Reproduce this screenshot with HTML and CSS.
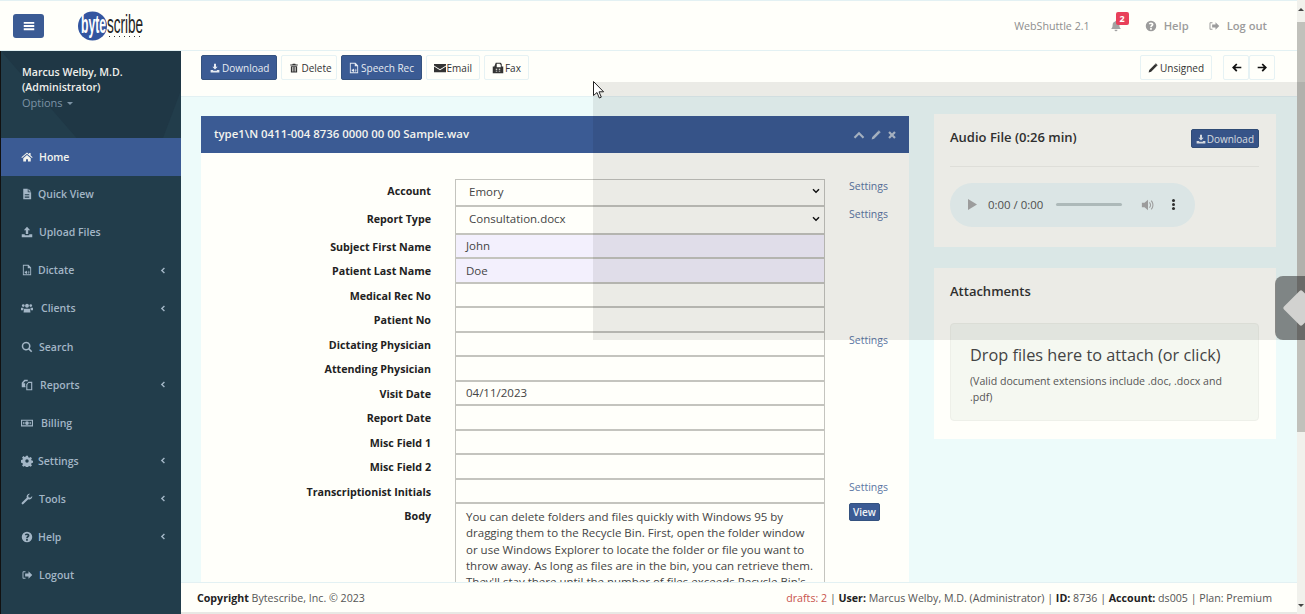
FILE: index.html
```html
<!DOCTYPE html>
<html lang="en">
<head>
    <meta charset="UTF-8">
    <title>WebShuttle</title>
    <link rel="stylesheet" href="styles.css">
</head>
<body>
    <svg class="icon-defs" aria-hidden="true">
        <symbol id="i-bars" viewBox="0 0 16 16"><path d="M1 2.5h14v2.4H1zM1 6.8h14v2.4H1zM1 11.1h14v2.4H1z"/></symbol>
        <symbol id="i-home" viewBox="0 0 16 16"><path d="M8 2 .5 8.3l.9 1L8 3.8l6.6 5.5.9-1L12.8 6V2.6h-2v1.7zM3 9.6V14h3.7v-3h2.6v3H13V9.6L8 5.4z"/></symbol>
        <symbol id="i-file" viewBox="0 0 16 16"><path d="M3 1h6v4.5h4.5V15H3zM10 1l3.5 3.5H10zM5 8v1h6V8zm0 2.2v1h6v-1zm0 2.2v1h6v-1z" fill-rule="evenodd"/></symbol>
        <symbol id="i-upload" viewBox="0 0 16 16"><path d="M8 1 3.8 5.5h2.6v5h3.2v-5h2.6zM1 11h4v1.2h6V11h4v4H1z"/></symbol>
        <symbol id="i-download" viewBox="0 0 16 16"><path d="M6.4 1h3.2v5h2.6L8 10.5 3.8 6h2.6zM1 11h4v1.2h6V11h4v4H1z"/></symbol>
        <symbol id="i-audio" viewBox="0 0 16 16"><path d="M2.5 1H10l3.5 3.500V15h-11zM3.700 2.200v11.600h8.600V5.600H9V2.200zM5 10h1.500L8 8.600v5L6.500 12.200H5zm4 0c.9.700.9 1.800 0 2.500zm1-1.200c1.600 1.200 1.600 3.600 0 4.800z" fill-rule="evenodd"/></symbol>
        <symbol id="i-users" viewBox="0 0 16 16"><circle cx="8" cy="5" r="2.600"/><circle cx="3" cy="4.800" r="1.800"/><circle cx="13" cy="4.800" r="1.800"/><path d="M4 9h8l.6 5H3.400zM0 7.500h3.400L3 11H0zM12.600 7.500H16V11h-3z"/></symbol>
        <symbol id="i-search" viewBox="0 0 16 16"><path d="M6.800 1a5.800 5.800 0 1 0 3.300 10.600l3.400 3.400 1.500-1.500-3.400-3.400A5.800 5.800 0 0 0 6.800 1m0 2a3.800 3.800 0 1 1 0 7.600 3.800 3.800 0 0 1 0-7.600" fill-rule="evenodd"/></symbol>
        <symbol id="i-copy" viewBox="0 0 16 16"><path d="M4.500 1H9v2H5.500L3 5.500h2.500v4H6v1.500H1V5zM10 3.500h5V15H7V7zM10 5.300 8.500 7.600v6h5V5.300z" fill-rule="evenodd"/></symbol>
        <symbol id="i-money" viewBox="0 0 16 16"><path d="M0 3.500h16v9H0zm1.500 1.500v6h13V5zM8 5.500a2.500 2.500 0 1 1 0 5 2.500 2.500 0 0 1 0-5M3 6.500h1.500v3H3zM11.500 6.500H13v3h-1.500z" fill-rule="evenodd"/></symbol>
        <symbol id="i-cog" viewBox="0 0 16 16"><path d="M6.700 1h2.600l.4 2 1.400.6 1.700-1.100 1.800 1.800-1.100 1.700.6 1.400 2 .4v2.600l-2 .4-.6 1.400 1.100 1.700-1.800 1.800-1.700-1.100-1.400.6-.4 2H6.700l-.4-2-1.400-.6-1.700 1.100-1.800-1.800 1.100-1.700-.6-1.400-2-.4V6.700l2-.4.6-1.400-1.100-1.700 1.800-1.800 1.700 1.100 1.400-.6zM8 5.700a2.300 2.300 0 1 0 0 4.600 2.300 2.300 0 0 0 0-4.600" fill-rule="evenodd"/></symbol>
        <symbol id="i-wrench" viewBox="0 0 16 16"><path d="M11.500 1a4 4 0 0 0-3.800 5.300L1.200 12.800a1.400 1.400 0 0 0 2 2l6.500-6.500A4 4 0 0 0 15 4l-2.600 2.400L10 5.500 9.600 3.300 12.200 1z"/></symbol>
        <symbol id="i-help" viewBox="0 0 16 16"><path d="M8 1a7 7 0 1 0 0 14A7 7 0 0 0 8 1m-1.200 9.800h2.300V13H6.800zM8 3.200c2 0 3.300 1.100 3.300 2.700 0 2.200-2.300 2.200-2.200 3.900H6.900c-.2-2.500 2-2.800 2-3.800 0-.5-.4-.8-1-.8-.6 0-1.100.3-1.600.8L5 4.700c.8-1 1.800-1.500 3-1.500" fill-rule="evenodd"/></symbol>
        <symbol id="i-logout" viewBox="0 0 16 16"><path d="M6 3H3.500C2.700 3 2 3.700 2 4.500v7c0 .8.700 1.500 1.500 1.500H6v-1.300H3.800c-.3 0-.5-.2-.5-.5V4.800c0-.3.200-.5.500-.5H6zM10 3l5 5-5 5v-3H5.500V6H10z"/></symbol>
        <symbol id="i-trash" viewBox="0 0 16 16"><path d="M6 1h4l.7 1.500H14V4H2V2.500h3.300zM3 5h10v10H3zm2 1.500v7h1v-7zm2.500 0v7h1v-7zm2.500 0v7h1v-7z" fill-rule="evenodd"/></symbol>
        <symbol id="i-mail" viewBox="0 0 16 16"><path d="M0 2.500h16v2L8 9.500l-8-5zM0 6l8 5 8-5v7.500H0z"/></symbol>
        <symbol id="i-fax" viewBox="0 0 16 16"><path d="M5 1h6.500L13 2.500V6h2v9H1V6h2zm1.300 1.200V7h5.400V3.200H10.500v-1zM5 9v1.300h2V9zm4 0v1.300h2V9zm-4 2.500v1.300h2v-1.300zm4 0v1.300h2v-1.300z" fill-rule="evenodd"/></symbol>
        <symbol id="i-pencil" viewBox="0 0 16 16"><path d="M11.500 1.500 14.500 4.500 5 14l-4 1 1-4zM12.500 .5l3 3-.8.8-3-3z"/></symbol>
        <symbol id="i-bell" viewBox="0 0 16 16"><path d="M8 1a1 1 0 0 1 1 1c2.500.5 3.500 2.300 3.500 4.500 0 3 1 4 2 5.500h-13c1-1.500 2-2.500 2-5.500C3.500 4.300 4.500 2.500 7 2a1 1 0 0 1 1-1M6 13h4a2 2 0 0 1-4 0"/></symbol>
        <symbol id="i-close" viewBox="0 0 16 16"><path d="M4.500 2 8 5.500 11.500 2 14 4.500 10.500 8l3.500 3.500-2.500 2.500L8 10.500 4.500 14 2 11.500 5.500 8 2 4.500z"/></symbol>
        <symbol id="i-up" viewBox="0 0 16 16"><path d="M8 3.500 15 10.500l-2 2-5-5-5 5-2-2z"/></symbol>
        <symbol id="i-left" viewBox="0 0 16 16"><path d="M7.500 2 9.300 3.800 6.300 6.800H15v2.400H6.300l3 3L7.500 14 1.500 8z"/></symbol>
        <symbol id="i-right" viewBox="0 0 16 16"><path d="M8.500 2 6.700 3.800l3 3H1v2.400h8.700l-3 3L8.500 14l6-6z"/></symbol>
        <symbol id="i-angle" viewBox="0 0 16 16"><path d="M10.500 2.500 12.300 4.300 8.500 8l3.800 3.700-1.800 1.800L5 8z"/></symbol>
        <symbol id="i-drop" viewBox="0 0 16 16"><path d="M1 5.500 3 3.500 8 8.500 13 3.500 15 5.500 8 12.500z"/></symbol>
    </svg>

    <div class="page">
        <div class="page-main">
            <header class="topbar">
                <button class="menu-btn"><svg class="ico"><use href="#i-bars"/></svg></button>
                <svg class="logo" viewBox="0 -4 66 38" width="66" height="38">
                    <circle cx="14.500" cy="15" r="14.500" fill="#3355a0"/>
                    <text transform="translate(3 22) scale(.467 1)" class="logo-byte">byte</text>
                    <text transform="translate(29 22) scale(.52 1)" class="logo-scribe">scribe</text>
                    <path d="M31 25.500h1M36 25.500h1M41 25.500h1M46 25.500h1M51 25.500h1M56 25.500h1M61 25.500h1" stroke="#333" stroke-width="1.200"/>
                </svg>
                <div class="topbar-right">
                    <span class="version">WebShuttle 2.1</span>
                    <span class="bell"><svg class="ico"><use href="#i-bell"/></svg><span class="badge">2</span></span>
                    <a class="top-link top-help"><svg class="ico"><use href="#i-help"/></svg>Help</a>
                    <a class="top-link"><svg class="ico"><use href="#i-logout"/></svg>Log out</a>
                </div>
            </header>

            <div class="layout">
                <aside class="sidebar">
                    <div class="user-panel">
                        <div class="user-name">Marcus Welby, M.D.<br>(Administrator)</div>
                        <div class="user-options">Options <span class="caret"></span></div>
                    </div>
                    <nav class="nav">
                        <a class="nav-item active"><svg class="ico"><use href="#i-home"/></svg><span>Home</span></a>
                        <a class="nav-item"><svg class="ico"><use href="#i-file"/></svg><span class="slim">Quick View</span></a>
                        <a class="nav-item"><svg class="ico"><use href="#i-upload"/></svg><span>Upload Files</span></a>
                        <a class="nav-item"><svg class="ico"><use href="#i-audio"/></svg><span class="slim">Dictate</span><svg class="ico angle"><use href="#i-angle"/></svg></a>
                        <a class="nav-item"><svg class="ico"><use href="#i-users"/></svg><span class="wide">Clients</span><svg class="ico angle"><use href="#i-angle"/></svg></a>
                        <a class="nav-item"><svg class="ico"><use href="#i-search"/></svg><span>Search</span></a>
                        <a class="nav-item"><svg class="ico"><use href="#i-copy"/></svg><span class="mid">Reports</span><svg class="ico angle"><use href="#i-angle"/></svg></a>
                        <a class="nav-item"><svg class="ico"><use href="#i-money"/></svg><span class="wide">Billing</span></a>
                        <a class="nav-item"><svg class="ico"><use href="#i-cog"/></svg><span class="slim">Settings</span><svg class="ico angle"><use href="#i-angle"/></svg></a>
                        <a class="nav-item"><svg class="ico"><use href="#i-wrench"/></svg><span>Tools</span><svg class="ico angle"><use href="#i-angle"/></svg></a>
                        <a class="nav-item"><svg class="ico"><use href="#i-help"/></svg><span class="slim">Help</span><svg class="ico angle"><use href="#i-angle"/></svg></a>
                        <a class="nav-item"><svg class="ico"><use href="#i-logout"/></svg><span>Logout</span></a>
                    </nav>
                </aside>

                <div class="content">
                    <div class="toolbar">
                        <button class="btn btn-blue btn-download"><svg class="ico"><use href="#i-download"/></svg>Download</button>
                        <button class="btn btn-delete"><svg class="ico"><use href="#i-trash"/></svg>Delete</button>
                        <button class="btn btn-blue btn-lg btn-speech"><svg class="ico"><use href="#i-audio"/></svg>Speech Rec</button>
                        <button class="btn btn-lg"><svg class="ico"><use href="#i-mail"/></svg>Email</button>
                        <button class="btn btn-lg"><svg class="ico"><use href="#i-fax"/></svg>Fax</button>
                        <div class="toolbar-right">
                            <button class="btn"><svg class="ico"><use href="#i-pencil"/></svg>Unsigned</button>
                            <div class="btn-group">
                                <button class="btn btn-arrow"><svg class="ico"><use href="#i-left"/></svg></button>
                                <button class="btn btn-arrow"><svg class="ico"><use href="#i-right"/></svg></button>
                            </div>
                        </div>
                    </div>

                    <main class="workspace">
                        <section class="panel">
                            <div class="panel-head">
                                <h2>type1\N 0411-004 8736 0000 00 00 Sample.wav</h2>
                                <div class="panel-tools">
                                    <svg class="ico tool-up"><use href="#i-up"/></svg>
                                    <svg class="ico"><use href="#i-pencil"/></svg>
                                    <svg class="ico"><use href="#i-close"/></svg>
                                </div>
                            </div>
                            <form class="form">
                                <label>Account</label>
                                <div class="field field-select">Emory<svg class="ico"><use href="#i-drop"/></svg></div>
                                <a class="settings">Settings</a>

                                <label>Report Type</label>
                                <div class="field field-select">Consultation.docx<svg class="ico"><use href="#i-drop"/></svg></div>
                                <a class="settings">Settings</a>

                                <label>Subject First Name</label>
                                <div class="field field-req">John</div>
                                <span></span>

                                <label>Patient Last Name</label>
                                <div class="field field-req">Doe</div>
                                <span></span>

                                <label>Medical Rec No</label>
                                <div class="field"></div>
                                <span></span>

                                <label>Patient No</label>
                                <div class="field"></div>
                                <span></span>

                                <label>Dictating Physician</label>
                                <div class="field"></div>
                                <a class="settings">Settings</a>

                                <label>Attending Physician</label>
                                <div class="field"></div>
                                <span></span>

                                <label>Visit Date</label>
                                <div class="field">04/11/2023</div>
                                <span></span>

                                <label>Report Date</label>
                                <div class="field"></div>
                                <span></span>

                                <label>Misc Field 1</label>
                                <div class="field"></div>
                                <span></span>

                                <label>Misc Field 2</label>
                                <div class="field"></div>
                                <span></span>

                                <label>Transcriptionist Initials</label>
                                <div class="field"></div>
                                <a class="settings">Settings</a>

                                <label>Body</label>
                                <div class="field field-body">You can delete folders and files quickly with Windows 95 by dragging them to the Recycle Bin. First, open the folder window or use Windows Explorer to locate the folder or file you want to throw away. As long as files are in the bin, you can retrieve them. They'll stay there until the number of files exceeds Recycle Bin's</div>
                                <div><button type="button" class="btn-view">View</button></div>
                            </form>
                        </section>

                        <div class="side-col">
                            <section class="card card-audio">
                                <div class="card-head">
                                    <h3>Audio File (0:26 min)</h3>
                                    <button class="btn btn-blue btn-sm"><svg class="ico"><use href="#i-download"/></svg>Download</button>
                                </div>
                                <div class="player">
                                    <svg class="player-play" viewBox="0 0 10 12" width="9" height="11"><path d="M0 0l10 6-10 6z"/></svg>
                                    <span class="player-time">0:00 / 0:00</span>
                                    <span class="player-bar"></span>
                                    <svg class="player-vol" viewBox="0 0 16 16" width="14" height="14"><path d="M1 5.500h3L8 2v12L4 10.500H1zM10 4.500c2 2 2 5 0 7l-.8-.8c1.500-1.600 1.500-3.800 0-5.400zM12 2.500c3 3 3 8 0 11l-.8-.8c2.500-2.600 2.500-6.800 0-9.400z"/></svg>
                                    <span class="player-more"></span>
                                </div>
                            </section>
                            <section class="card card-attach">
                                <h3>Attachments</h3>
                                <div class="dropzone">
                                    <h4>Drop files here to attach (or click)</h4>
                                    <p>(Valid document extensions include .doc, .docx and .pdf)</p>
                                </div>
                            </section>
                        </div>
                    </main>

                    <footer class="footer">
                        <div><b>Copyright</b> Bytescribe, Inc. © 2023</div>
                        <div><span class="drafts">drafts: 2</span> | <b>User:</b> Marcus Welby, M.D. (Administrator) | <b>ID:</b> 8736 | <b>Account:</b> ds005 | Plan: Premium</div>
                    </footer>
                </div>
            </div>
        </div>
        <div class="scrollbar">
            <span class="scroll-up"></span>
            <span class="scroll-thumb"></span>
            <span class="scroll-down"></span>
        </div>
    </div>

    <div class="handle"><span class="handle-diamond"></span></div>
    <div class="shade"></div>
    <svg class="cursor" viewBox="0 0 12 18" width="12" height="18"><path d="M.5.500v14l3.500-3 2.300 5.500 2-.9-2.300-5.300h4.600z" fill="#fff" stroke="#222" stroke-width="1"/></svg>
</body>
</html>
```
FILE: styles.css
```css
* { box-sizing: border-box; }

html, body {
    height: 100%;
    margin: 0;
    overflow: hidden;
}
body {
    font-family: "Open Sans", sans-serif;
    font-size: 11px;
    color: #333;
    background: #fffffa;
}
a { text-decoration: none; }
h2, h3, h4, p { margin: 0; }
button { font-family: inherit; cursor: pointer; }

.icon-defs { display: none; }
.ico {
    width: 12px;
    height: 12px;
    fill: currentColor;
    flex: none;
}

.page {
    display: flex;
    height: 100vh;
}
.page-main {
    flex: 1;
    min-width: 0;
    display: flex;
    flex-direction: column;
}

/* header */
.topbar {
    height: 51px;
    flex: none;
    display: flex;
    align-items: center;
    padding: 0 30px 0 13px;
    background: #fffffa;
    border-top: 1px solid #e3f1f3;
    border-bottom: 1px solid #e3f1f3;
}
.menu-btn {
    width: 31px;
    height: 24px;
    padding: 0;
    border: 0;
    border-radius: 3px;
    background: #3b5b94;
    color: #fff;
    display: flex;
    align-items: center;
    justify-content: center;
}
.logo { margin-left: 34px; }
.logo-byte { font: 700 26px "Liberation Sans", sans-serif; fill: #fff; }
.logo-scribe { font: 400 26px "Liberation Sans", sans-serif; fill: #222; }
.topbar-right {
    margin-left: auto;
    display: flex;
    align-items: center;
}
.version {
    font-size: 10.700px;
    color: #8e8e8e;
}
.bell {
    position: relative;
    margin-left: 20px;
    color: #a3a3a3;
    display: flex;
}
.badge {
    position: absolute;
    left: 6px;
    top: -8px;
    width: 13px;
    height: 13px;
    border-radius: 2px;
    background: #e8405a;
    color: #fff;
    font-size: 9px;
    font-weight: 700;
    line-height: 13px;
    text-align: center;
}
.top-link {
    display: flex;
    align-items: center;
    gap: 7px;
    font-size: 11.200px;
    font-weight: 600;
    color: #9c9c9c;
    margin-left: 19px;
}
.top-help { margin-left: 23px; }

/* main layout */
.layout {
    flex: 1;
    min-height: 0;
    display: flex;
}
.sidebar {
    width: 181px;
    flex: none;
    background: #223d4b;
    border-left: 1px solid #111;
}
.user-panel {
    position: relative;
    height: 87px;
    padding: 14px 21px 0;
    background: #223d4b;
    overflow: hidden;
}
.user-panel::before {
    content: "";
    position: absolute;
    inset: 0;
    background: #1f3745;
    clip-path: polygon(30% 0, 100% 0, 100% 45%, 90% 100%, 80% 100%, 42% 100%, 0 0);
}
.user-name, .user-options { position: relative; }
.user-name {
    font-size: 10.600px;
    font-weight: 600;
    line-height: 15px;
    color: #f0f0ec;
}
.user-options {
    font-size: 11px;
    line-height: 15px;
    color: #7c93a5;
}
.caret {
    display: inline-block;
    width: 0;
    height: 0;
    vertical-align: 2px;
    border: 3px solid transparent;
    border-top-color: #7c93a5;
    border-bottom: 0;
    margin-left: 2px;
}
.nav-item {
    height: 38.100px;
    display: flex;
    align-items: center;
    padding: 0 14px 2px 20px;
    font-size: 10.500px;
    font-weight: 600;
    color: #a3b6c6;
}
.nav-item span { margin-left: 6px; }
.nav-item span.slim { margin-left: 5px; }
.nav-item span.mid { margin-left: 7px; }
.nav-item span.wide { margin-left: 8px; }
.nav-item.active {
    padding-bottom: 0;
    background: #3b5b94;
    color: #f4f4ee;
}
.angle {
    margin-left: auto;
    width: 9px;
    height: 9px;
}

.content {
    flex: 1;
    min-width: 0;
    display: flex;
    flex-direction: column;
}

/* toolbar */
.toolbar {
    height: 46px;
    flex: none;
    display: flex;
    gap: 4px;
    padding: 4px 22px 0 20px;
    align-items: flex-start;
    background: #fffffa;
    border-bottom: 1px solid #e3f1f3;
}
.toolbar-right {
    margin-left: auto;
    display: flex;
    gap: 11px;
}
.btn {
    height: 25px;
    display: flex;
    align-items: center;
    gap: 2px;
    padding: 0 7px;
    border: 1px solid #e6f2f4;
    border-radius: 2px;
    background: #fffffa;
    color: #333;
    font-size: 10px;
}
.btn .ico { width: 10px; height: 10px; }
.btn-lg { gap: 1px; }
.btn-lg .ico { width: 12px; height: 12px; }
.btn-blue {
    background: #3b5b94;
    border-color: #34527f;
    color: #e6ebf2;
}
.btn-download { padding: 0 7px 0 8px; }
.btn-delete { padding: 0 4px 0 7px; }
.btn-speech { padding: 0 6.500px; }
.btn-group { display: flex; }
.btn-arrow { width: 26px; padding: 0; justify-content: center; color: #111; }
.btn-arrow .ico { width: 11px; height: 11px; }
.btn-sm {
    height: 19px;
    gap: 1px;
    padding: 0 4px;
    font-size: 10px;
}

/* workspace */
.workspace {
    flex: 1;
    min-height: 0;
    overflow: hidden;
    display: flex;
    gap: 25px;
    padding: 19px 21px 0 20px;
    background: #edfbfa;
}
.panel {
    width: 708px;
    flex: none;
    background: #fffffa;
}
.panel-head {
    height: 37px;
    display: flex;
    align-items: center;
    justify-content: space-between;
    padding: 0 12px 2px 13px;
    background: #3b5b94;
    color: #f4f4ee;
}
.panel-head h2 {
    font-size: 11.400px;
    font-weight: 600;
}
.panel-tools {
    display: flex;
    align-items: center;
    gap: 6px;
    margin-top: 3px;
    color: #b3bfd0;
}
.panel-tools .ico { width: 10px; height: 10px; }
.panel-tools .tool-up { width: 12px; height: 12px; }

.form {
    display: grid;
    grid-template-columns: 230px 370px 1fr;
    grid-auto-rows: 24.500px;
    grid-template-rows: 27.500px 28px;
    column-gap: 24px;
    padding-top: 26px;
}
.form label {
    padding-top: 5px;
    font-size: 10.700px;
    font-weight: 700;
    color: #222;
    text-align: right;
}
.field {
    height: 100%;
    display: flex;
    align-items: center;
    justify-content: space-between;
    padding: 0 4px 0 10px;
    font-size: 11.500px;
    color: #444;
    background: #fffffa;
    border: 1px solid #c4c4be;
    border-bottom-width: 2px;
    border-top: 0;
}
.form .field:first-of-type { border-top: 1px solid #c4c4be; }
.field-select { padding: 0 4px 2px 13px; }
.field-select .ico { width: 8px; height: 8px; color: #111; }
.field-req { background: #f3f0fd; }
.field-body {
    display: block;
    height: 110px;
    padding: 5px 10px;
    line-height: 16.300px;
    border-bottom: 0;
}
.settings {
    font-size: 10.500px;
    color: #5b76a3;
}
.btn-view {
    height: 18px;
    width: 31px;
    margin-top: -2px;
    padding: 0;
    border: 1px solid #34527f;
    border-radius: 2px;
    background: #3b5b94;
    color: #f0f2f5;
    font-size: 10px;
    font-weight: 600;
}

/* right column */
.side-col {
    flex: 1;
    min-width: 0;
    display: flex;
    flex-direction: column;
    gap: 21px;
    margin-top: -2px;
}
.card {
    background: #fffffa;
    padding: 0 17px 0 16px;
}
.card h3 {
    font-size: 13px;
    font-weight: 600;
    color: #333;
}
.card-audio { height: 133px; }
.card-head {
    height: 53px;
    display: flex;
    align-items: flex-start;
    justify-content: space-between;
    padding-top: 14px;
    border-bottom: 1px solid #f1f1ec;
}
.card-head .btn-sm { margin-top: 1px; }
.player {
    width: 245px;
    height: 44px;
    margin-top: 16px;
    display: flex;
    align-items: center;
    padding: 0 18px 1px;
    border-radius: 22px;
    background: #eef9f9;
    color: #555;
}
.player-play { fill: #aaa; }
.player-time {
    margin-left: 11px;
    font-size: 11.400px;
}
.player-bar {
    width: 66px;
    height: 3px;
    margin-left: 13px;
    border-radius: 2px;
    background: #bcc9c9;
}
.player-vol { margin-left: 19px; fill: #aaa; }
.player-more {
    width: 3px;
    height: 3px;
    margin-left: 17px;
    border-radius: 50%;
    background: #333;
    box-shadow: 0 -4px 0 #333, 0 4px 0 #333;
}
.card-attach {
    height: 171px;
    padding-top: 14px;
}
.dropzone {
    height: 98px;
    margin-top: 23px;
    padding: 20px 19px 0;
    border: 1px solid #eef0e9;
    border-radius: 4px;
    background: #f5f8f1;
}
.dropzone h4 {
    font-size: 16.300px;
    font-weight: 400;
    color: #444;
    line-height: 22px;
}
.dropzone p {
    margin-top: 8px;
    font-size: 10.600px;
    line-height: 15.500px;
    color: #555;
}

/* footer */
.footer {
    height: 32px;
    flex: none;
    display: flex;
    align-items: center;
    justify-content: space-between;
    padding: 0 25px 0 16px;
    font-size: 10.650px;
    color: #555;
    background: #fffffa;
    border-top: 1px solid #e3f1f3;
    border-bottom: 2px solid #e8e8e4;
}
.footer b { color: #222; font-weight: 700; }
.drafts { color: #c8524a; }

/* page scrollbar */
.scrollbar {
    width: 8px;
    flex: none;
    display: flex;
    flex-direction: column;
    background: #f1f1ec;
}
.scroll-up, .scroll-down {
    height: 22px;
    flex: none;
    position: relative;
}
.scroll-up::after, .scroll-down::after {
    content: "";
    position: absolute;
    left: 1px;
    width: 0;
    height: 0;
    border: 3px solid transparent;
}
.scroll-up::after { top: 8px; border-bottom-color: #444; border-top: 0; }
.scroll-down { margin-top: auto; }
.scroll-down::after { top: 12px; border-top-color: #444; border-bottom: 0; }
.scroll-thumb {
    height: 410px;
    background: #c1c1bb;
}

/* things lying over the page */
.handle {
    position: absolute;
    top: 276px;
    right: 0;
    width: 30px;
    height: 64px;
    overflow: hidden;
    border-radius: 8px 0 0 8px;
    background: rgba(40, 40, 40, .5);
}
.handle-diamond {
    position: absolute;
    top: 19px;
    left: 13px;
    width: 26px;
    height: 26px;
    border-radius: 2px;
    background: #e4e4e2;
    transform: rotate(45deg);
}
.shade {
    position: absolute;
    top: 82px;
    left: 593px;
    right: 0;
    height: 258px;
    background: rgba(0, 0, 0, .08);
    pointer-events: none;
}
.cursor {
    position: absolute;
    top: 81px;
    left: 593px;
}
```
